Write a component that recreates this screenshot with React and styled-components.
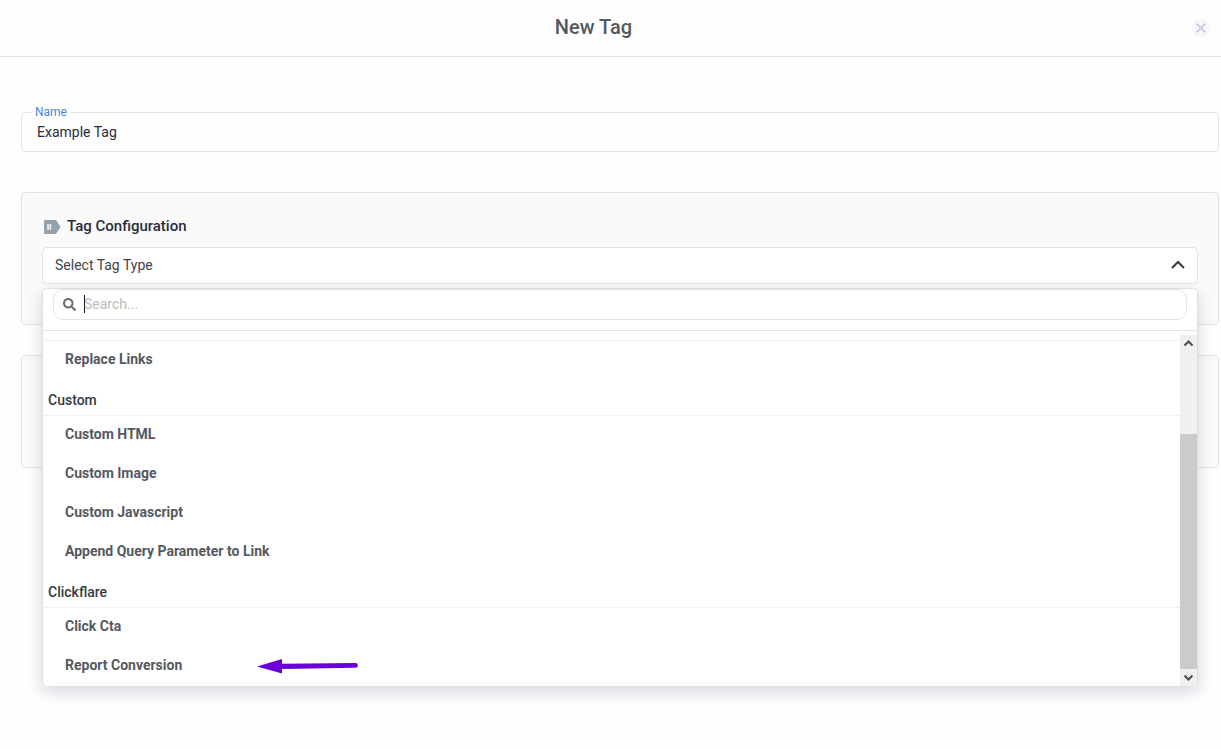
import React, { useState } from 'react';
import styled, { createGlobalStyle } from 'styled-components';
import { FaSearch } from 'react-icons/fa';

const GlobalStyle = createGlobalStyle`
  * {
    box-sizing: border-box;
  }

  body {
    margin: 0;
    background-color: #fefefe;
    color: #343a40;
    font-family: Roboto, 'Liberation Sans', sans-serif;
    font-size: 14px;
  }

  button,
  input {
    font-family: inherit;
    font-size: inherit;
  }
`;

const Page = styled.div`
  min-height: 100vh;
`;

const Header = styled.header`
  display: flex;
  align-items: center;
  gap: 4px;
  height: 57px;
  padding-right: 10px;
  border-bottom: 1px solid #e2e3e5;
`;

const Title = styled.h1`
  flex: 1;
  margin: 0;
  padding-bottom: 2px;
  color: #54595f;
  font-size: 20px;
  font-weight: 500;
  line-height: 24px;
  text-align: center;
`;

const CloseButton = styled.button`
  display: flex;
  align-items: center;
  justify-content: center;
  width: 20px;
  height: 20px;
  padding: 0;
  border: none;
  border-radius: 50%;
  background-color: #f8f8fa;
  cursor: pointer;
`;

const Main = styled.main`
  display: flex;
  flex-direction: column;
  padding: 55px 2px 40px 21px;
`;

const Field = styled.div`
  position: relative;
  margin-bottom: 40px;
`;

const FieldLabel = styled.label`
  position: absolute;
  top: -8px;
  left: 10px;
  padding: 0 4px;
  background-color: #fefefe;
  color: #4a86e0;
  font-size: 12px;
  line-height: 16px;
`;

const TextInput = styled.input`
  display: block;
  width: 100%;
  height: 40px;
  padding: 0 15px;
  border: 1px solid #e2e3e5;
  border-radius: 4px;
  outline: none;
  background-color: #fefefe;
  color: #282d3c;
`;

const Card = styled.section`
  min-height: 113px;
  margin-bottom: 30px;
  padding: 20px 20px 40px;
  border: 1px solid #e4e4e6;
  border-radius: 4px;
  background-color: #fafafa;
`;

const CardTitle = styled.h2`
  display: flex;
  align-items: center;
  gap: 6px;
  margin: 0 0 8px;
  padding-left: 2px;
  color: #282d3c;
  font-size: 15px;
  font-weight: 500;
  line-height: 26px;
`;

const SelectWrapper = styled.div`
  position: relative;
`;

const SelectButton = styled.button`
  display: flex;
  align-items: center;
  justify-content: space-between;
  width: 100%;
  height: 37px;
  padding: 0 12px 2px;
  border: 1px solid #e2e3e5;
  border-radius: 5px;
  background-color: #fff;
  color: #3f444b;
  cursor: pointer;
`;

const Dropdown = styled.div`
  position: absolute;
  z-index: 1;
  top: 100%;
  left: 0;
  right: 0;
  margin-top: 4px;
  overflow: hidden;
  border: 1px solid #dfdfe3;
  border-bottom: none;
  border-radius: 5px;
  background-color: #fff;
  box-shadow: 0 6px 16px rgba(50, 50, 93, 0.2);
`;

const SearchRow = styled.div`
  padding: 0 10px 10px;
  border-bottom: 1px solid #e2e3e5;
`;

const SearchBox = styled.label`
  display: flex;
  align-items: center;
  height: 31px;
  padding: 0 9px 1px;
  border: 1px solid #e2e3e5;
  border-radius: 10px;
  color: #6a6f76;
`;

const Caret = styled.span`
  width: 1px;
  height: 18px;
  margin-left: 8px;
  margin-right: -1px;
  background-color: #111;
`;

const SearchInput = styled.input`
  flex: 1;
  min-width: 0;
  height: 18px;
  padding: 0;
  border: none;
  outline: none;
  background: none;
  caret-color: transparent;

  &::placeholder {
    color: #bcbcbc;
  }
`;

const ListArea = styled.div`
  display: flex;
`;

const List = styled.div`
  flex: 1;
  padding-top: 9px;
`;

const Group = styled.div`
  &:first-child {
    border-top: 1px solid #f0f0f2;
  }
`;

const GroupTitle = styled.div`
  padding: 11px 5px 6px;
  border-bottom: 1px solid #f0f0f2;
  color: #343a40;
  font-weight: 500;
  line-height: 18px;
`;

const Option = styled.button`
  display: flex;
  align-items: center;
  gap: 75px;
  width: 100%;
  padding: 9px 22px 12px;
  border: none;
  background: none;
  color: #54595f;
  font-weight: 700;
  line-height: 18px;
  text-align: left;
  cursor: pointer;
`;

const ScrollBar = styled.div`
  display: flex;
  flex-direction: column;
  width: 17px;
  margin-top: 4px;
  background-color: #f0f0f0;
`;

const ScrollArrow = styled.span`
  display: flex;
  align-items: center;
  justify-content: center;
  height: 17px;
`;

const ScrollSpace = styled.div`
  flex: 82;
`;

const ScrollThumb = styled.div`
  flex: 235;
  background-color: #cbcbcb;
`;

const groups = [
  { options: ['Replace Links'] },
  {
    title: 'Custom',
    options: [
      'Custom HTML',
      'Custom Image',
      'Custom Javascript',
      'Append Query Parameter to Link',
    ],
  },
  { title: 'Clickflare', options: ['Click Cta', 'Report Conversion'] },
];

function TagIcon() {
  return (
    <svg width="17" height="16" viewBox="0 -2 17 16" aria-hidden="true">
      <path
        d="M1 0h10.5a1 1 0 0 1 .8.4L16.5 7l-4.2 6.6a1 1 0 0 1-.8.4H1a1 1 0 0 1-1-1V1a1 1 0 0 1 1-1z"
        fill="#95a1ab"
      />
      <path d="M3.2 4h1.7v6H3.2zM5.6 4h1.6v6H5.6z" fill="#eef1f3" />
    </svg>
  );
}

function ScrollChevron({ down }) {
  return (
    <svg width="9" height="7" viewBox="0 0 9 7" aria-hidden="true">
      <path
        d={down ? 'M0.500 1.500l4 4 4-4' : 'M0.500 5.500l4-4 4 4'}
        fill="none"
        stroke="#505050"
        strokeWidth="2.200"
      />
    </svg>
  );
}

function Arrow() {
  return (
    <svg width="102" height="18" viewBox="0 -2 102 18" aria-hidden="true">
      <path
        d="M0 8.500L25 1v4.800L98.500 5a2.400 2.400 0 0 1 0 4.800L25 11v4.500z"
        fill="#6a00d8"
      />
    </svg>
  );
}

function App() {
  const [name, setName] = useState('Example Tag');
  const [search, setSearch] = useState('');

  return (
    <Page>
      <GlobalStyle />
      <Header>
        <Title>New Tag</Title>
        <CloseButton type="button" aria-label="Close">
          <svg width="10" height="10" viewBox="0 0 10 10">
            <path
              d="M0.500 0.500l9 9M9.500 0.500l-9 9"
              stroke="#cdd0e3"
              strokeWidth="2"
            />
          </svg>
        </CloseButton>
      </Header>
      <Main>
        <Field>
          <TextInput
            id="tag-name"
            type="text"
            value={name}
            onChange={(e) => setName(e.target.value)}
          />
          <FieldLabel htmlFor="tag-name">Name</FieldLabel>
        </Field>
        <Card>
          <CardTitle>
            <TagIcon />
            Tag Configuration
          </CardTitle>
          <SelectWrapper>
            <SelectButton
              type="button"
              aria-haspopup="listbox"
              aria-expanded="true"
              aria-controls="tag-types"
            >
              Select Tag Type
              <svg width="14" height="9" viewBox="0 0 14 9" aria-hidden="true">
                <path
                  d="M1 8l6-6 6 6"
                  fill="none"
                  stroke="#343a40"
                  strokeWidth="2"
                />
              </svg>
            </SelectButton>
            <Dropdown>
              <SearchRow>
                <SearchBox htmlFor="tag-search">
                  <FaSearch size={13} aria-hidden="true" />
                  <Caret />
                  <SearchInput
                    id="tag-search"
                    type="text"
                    aria-label="Search"
                    placeholder="Search..."
                    value={search}
                    onChange={(e) => setSearch(e.target.value)}
                  />
                </SearchBox>
              </SearchRow>
              <ListArea>
                <List id="tag-types" role="listbox" aria-label="Tag type">
                  {groups.map((group) => (
                    <Group key={group.options[0]} role="group">
                      {group.title && <GroupTitle>{group.title}</GroupTitle>}
                      {group.options.map((option) => (
                        <Option key={option} type="button" role="option">
                          {option}
                          {option === 'Report Conversion' && <Arrow />}
                        </Option>
                      ))}
                    </Group>
                  ))}
                </List>
                <ScrollBar aria-hidden="true">
                  <ScrollArrow>
                    <ScrollChevron />
                  </ScrollArrow>
                  <ScrollSpace />
                  <ScrollThumb />
                  <ScrollArrow>
                    <ScrollChevron down />
                  </ScrollArrow>
                </ScrollBar>
              </ListArea>
            </Dropdown>
          </SelectWrapper>
        </Card>
        <Card />
      </Main>
    </Page>
  );
}

export default App;
